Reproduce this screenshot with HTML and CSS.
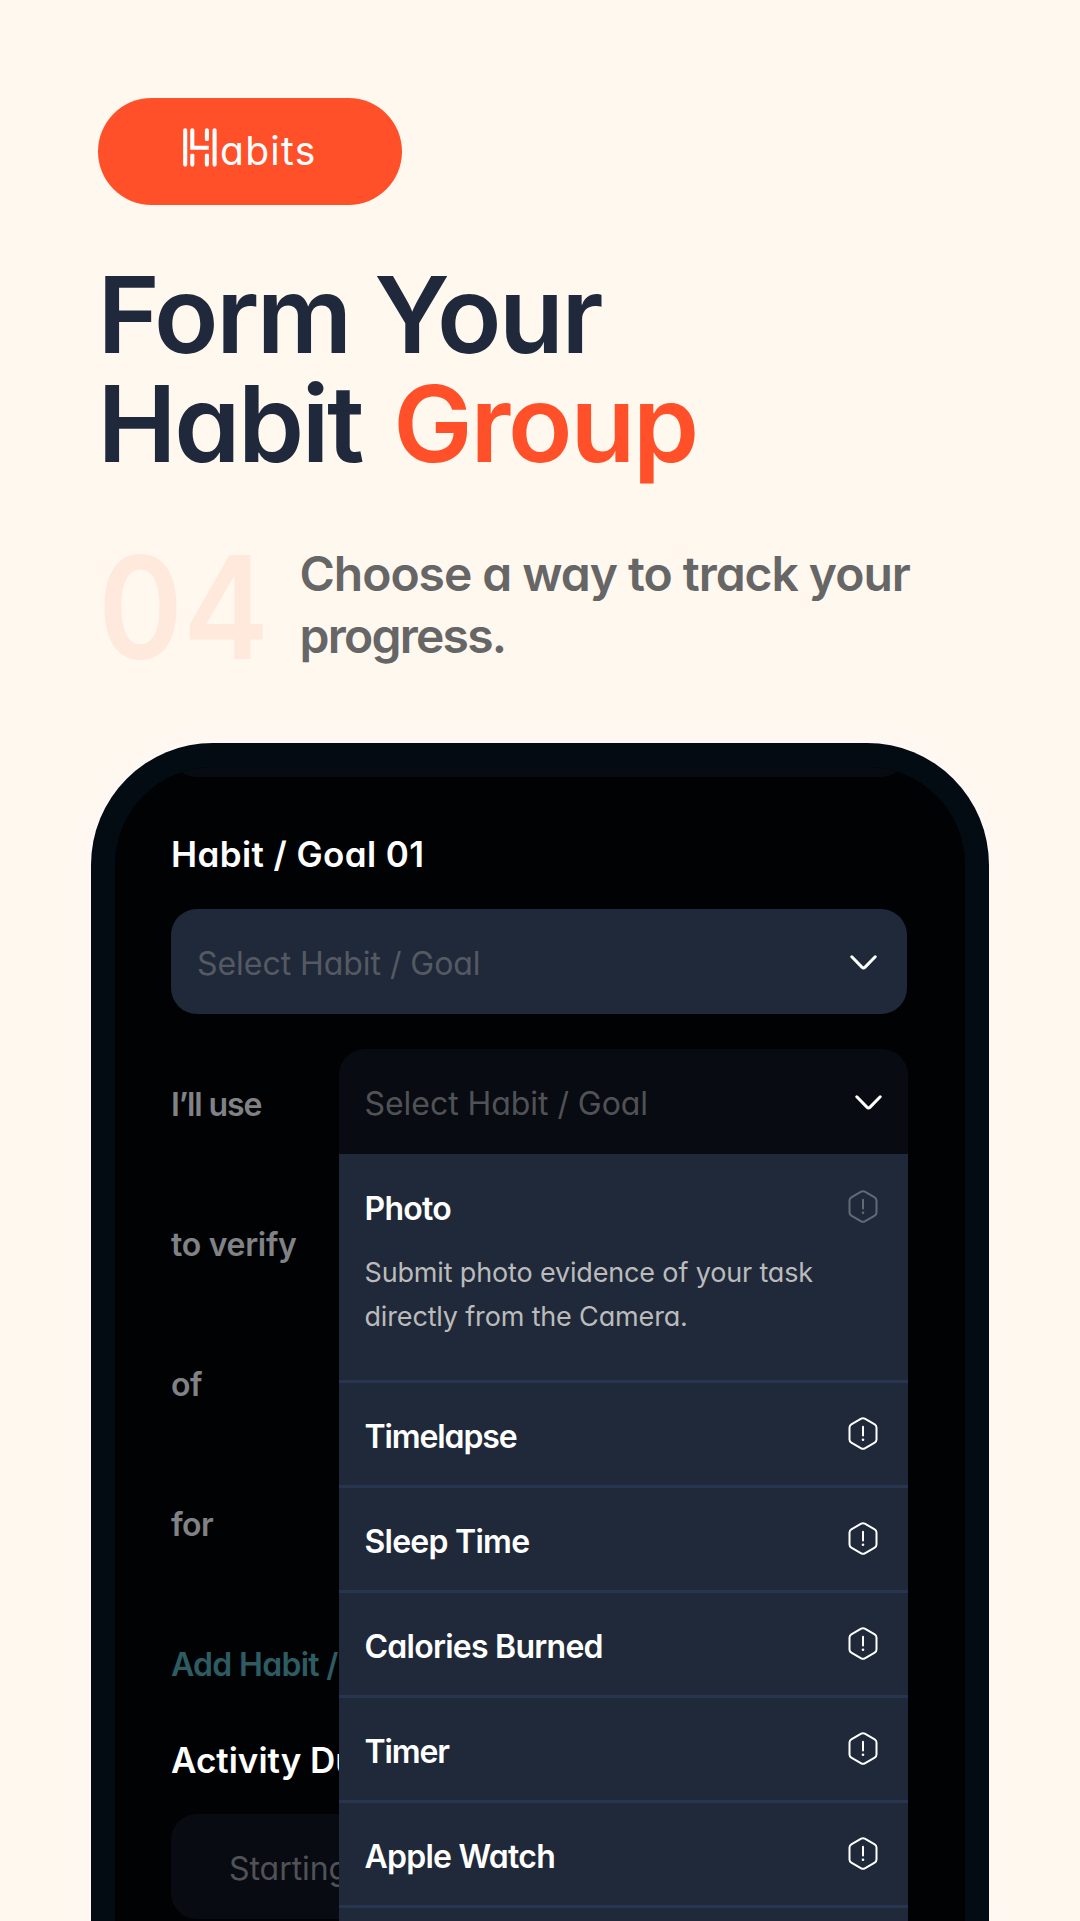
FILE: index.html
```html
<!DOCTYPE html>
<html lang="en">
<head>
<meta charset="utf-8">
<title>Habits – Form Your Habit Group</title>
<link rel="stylesheet" href="styles.css">
</head>
<body>
<svg class="defs" aria-hidden="true">
  <symbol id="info" viewBox="0 0 30 33">
    <path d="M13.2 1.7q1.8-1 3.6 0l9.9 5.6q1.8 1 1.8 3.1v12.2q0 2.1-1.8 3.1l-9.9 5.6q-1.8 1-3.6 0l-9.9-5.6q-1.8-1-1.8-3.1V10.4q0-2.1 1.8-3.1z" fill="none" stroke="currentColor" stroke-width="2"/>
    <path d="M15 9.8v8.6" stroke="currentColor" stroke-width="2" stroke-linecap="round"/>
    <circle cx="15" cy="22.7" r="1.3" fill="currentColor"/>
  </symbol>
  <symbol id="chevron" viewBox="0 0 27 15">
    <path d="M1.8 1.8 11.9 12.1q1.6 1.5 3.2 0L25.2 1.8" fill="none" stroke="currentColor" stroke-width="3" stroke-linecap="round"/>
  </symbol>
</svg>

<main class="page">
  <header class="intro">
    <div class="logo">
      <svg class="logo-mark" width="34" height="39" viewBox="0 0 34 39">
        <path d="M2.2 2.2v34.4M31.6 2.2v34.4M9.3 2.2v17.6h16.4M9.3 27v9.6M23.9 27v9.6M23.9 2.2v9" fill="none" stroke="#fff" stroke-width="4.1" stroke-linecap="round"/>
        <path d="M7 23.6h5v2.2H7zM21.6 23.6h5v2.2h-5zM21.6 13.2h5v2.4h-5zM25.8 17.4h3v5h-3z" fill="#ff5029"/>
      </svg>
      <span class="logo-name">abits</span>
    </div>
    <h1 class="headline">Form Your<br>Habit <span class="accent">Group</span></h1>
    <div class="step">
      <span class="step-number">04</span>
      <p class="step-text">Choose a way to track your <span class="step-end">progress.</span></p>
    </div>
  </header>

  <section class="phone">
    <div class="screen">
      <div class="strip"></div>
      <h2 class="title">Habit / Goal 01</h2>
      <div class="field field-lit"><span>Select Habit / Goal</span><svg class="chevron"><use href="#chevron"/></svg></div>

      <div class="rows">
        <div class="row">
          <span class="label snug">I’ll use</span>
          <div class="picker">
            <div class="field field-open"><span>Select Habit / Goal</span><svg class="chevron"><use href="#chevron"/></svg></div>
            <ul class="menu">
              <li class="item">
                <div class="item-head"><span>Photo</span><svg class="info faded"><use href="#info"/></svg></div>
                <p class="item-text">Submit photo evidence of your task<br>directly from the Camera.</p>
              </li>
              <li class="item"><div class="item-head"><span class="snug">Timelapse</span><svg class="info"><use href="#info"/></svg></div></li>
              <li class="item"><div class="item-head"><span>Sleep Time</span><svg class="info"><use href="#info"/></svg></div></li>
              <li class="item"><div class="item-head"><span>Calories Burned</span><svg class="info"><use href="#info"/></svg></div></li>
              <li class="item"><div class="item-head"><span class="snug">Timer</span><svg class="info"><use href="#info"/></svg></div></li>
              <li class="item"><div class="item-head"><span>Apple Watch</span><svg class="info"><use href="#info"/></svg></div></li>
              <li class="item"></li>
            </ul>
          </div>
        </div>
        <div class="row"><span class="label wide">to verify</span></div>
        <div class="row"><span class="label">of</span></div>
        <div class="row"><span class="label">for</span></div>
        <div class="row"><span class="label add">Add Habit /</span></div>
      </div>

      <h2 class="title title-activity">Activity Du</h2>
      <div class="field field-date"><span>Starting</span></div>
    </div>
  </section>
</main>
</body>
</html>
```
FILE: styles.css
```css
* { box-sizing: border-box; }

body {
  margin: 0;
  background: #fff8ee;
  font-family: Inter, "Liberation Sans", sans-serif;
  font-feature-settings: "cv11";
}

h1, h2, p, ul { margin: 0; padding: 0; }
svg { display: block; flex: none; }
.defs { display: none; }

.page {
  width: 1080px;
  height: 1921px;
  padding-top: 97.5px;
  overflow: hidden;
  display: flex;
  flex-direction: column;
}

.intro { padding-left: 97.5px; }

.logo {
  width: 304.5px;
  height: 107.5px;
  padding: 0 0 8px 85px;
  border-radius: 54px;
  background: #ff5029;
  display: flex;
  align-items: center;
  gap: 3.5px;
}
.logo-name {
  font-size: 39px;
  line-height: 48px;
  letter-spacing: 1.3px;
  color: #fff;
  padding-top: 8px;
}

.headline {
  margin-top: 55px;
  font-size: 106px;
  font-weight: 600;
  line-height: 109px;
  letter-spacing: -2.4px;
  color: #1f293b;
}
.accent { margin-left: 7px; letter-spacing: -2.2px; color: #ff5029; }

.step {
  margin-top: 65px;
  display: grid;
  grid-template-columns: 202px 1fr;
}
.step-number {
  margin-top: 9px;
  font-size: 143px;
  font-weight: 600;
  line-height: 110px;
  color: #ffe8dc;
  transform: scaleX(.9);
  transform-origin: left;
}
.step-text {
  width: 640px;
  font-size: 48px;
  font-weight: 600;
  line-height: 61.5px;
  letter-spacing: -1.03px;
  color: #666;
}
.step-end { letter-spacing: -1.75px; }

.phone {
  flex: none;
  width: 898px;
  height: 1178px;
  margin: 77px 0 0 91px;
  border: 24px solid #030b13;
  border-bottom: 0;
  border-radius: 122px 122px 0 0;
  background: #030b13;
  box-shadow: 0 0 26px 14px #fff8f3;
}
.screen {
  height: 1154px;
  padding: 0 58px 0 56px;
  border-radius: 98px 98px 0 0;
  background: #010204;
  overflow: hidden;
}

/* Lower edge of the field that is scrolled out of view. */
.strip {
  height: 60px;
  margin-top: -50px;
  border-radius: 26px;
  background: #080b12;
}

.title {
  margin-top: 55px;
  font-size: 35px;
  font-weight: 600;
  line-height: 44px;
  letter-spacing: .4px;
  color: #fff;
}
.title-activity { margin-top: 24px; letter-spacing: 0; }

.field {
  height: 105px;
  padding: 4px 30px 0 26px;
  border-radius: 26px;
  display: flex;
  align-items: center;
  justify-content: space-between;
  font-size: 32px;
  letter-spacing: -.05px;
  color: #505256;
}
.field-lit { margin-top: 33px; background: #1f293a; color: #555a62; }
.field-open { padding-right: 26px; border-radius: 26px 26px 0 0; background: #080b12; }
.field-date { margin-top: 32px; padding-left: 58px; background: #080b12; }

.chevron { width: 27px; height: 15px; color: #fff; margin-bottom: 3px; }

.rows {
  margin-top: 35px;
  display: flex;
  flex-direction: column;
  gap: 35px;
}
.row { height: 105px; display: flex; }
.label {
  width: 167.5px;
  padding-top: 4px;
  font-size: 32px;
  font-weight: 600;
  line-height: 103px;
  letter-spacing: -.6px;
  white-space: nowrap;
  color: #808285;
}
.add { letter-spacing: -.7px; color: #2e5c63; }
.wide { letter-spacing: -.3px; }
.snug { letter-spacing: -1.1px; }

.picker { position: relative; flex: 1; margin: 0 -1.3px 0 0; }

/* The open list lies over the rows below it. */
.menu {
  position: absolute;
  top: 105px;
  left: 0;
  right: 0;
  z-index: 1;
  list-style: none;
  background: #1f293a;
}
.item {
  min-height: 105px;
  padding: 32px 30.5px 26px 26px;
  border-top: 3px solid #28354e;
}
.item:first-child { height: 225.5px; padding-top: 30px; border-top-color: transparent; }
.item-head {
  display: flex;
  align-items: center;
  justify-content: space-between;
  height: 44px;
  font-size: 32px;
  font-weight: 600;
  line-height: 44px;
  letter-spacing: -.75px;
  color: #fff;
}
.item-text {
  margin-top: 20px;
  font-size: 27px;
  line-height: 44px;
  letter-spacing: -.16px;
  white-space: nowrap;
  color: #bbb;
}
.info { width: 30px; height: 33px; margin-bottom: 6px; }
.faded { opacity: .3; }
```
